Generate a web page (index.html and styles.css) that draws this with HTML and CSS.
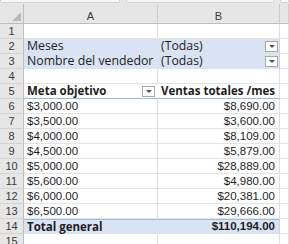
FILE: index.html
```html
<!DOCTYPE html>
<html>
<head>
<meta charset="utf-8">
<link rel="stylesheet" href="styles.css">
</head>
<body>
<div class="sheet">
  <div class="topbar">
    <div class="tb-box tb-left"></div>
    <div class="tb-box tb-mid"></div>
    <div class="tb-box tb-right"></div>
  </div>
  <div class="row head">
    <div class="rh corner"><span class="tri"></span></div>
    <div class="ch">A</div>
    <div class="ch">B</div>
    <div class="ch"></div>
  </div>
  <div class="row"><div class="rh">1</div><div class="c"></div><div class="c"></div><div class="c"></div></div>
  <div class="row filt"><div class="rh">2</div><div class="c f">Meses</div><div class="c f split"><span>(Todas)</span><span class="dd"></span></div><div class="c"></div></div>
  <div class="row filt"><div class="rh">3</div><div class="c f">Nombre del vendedor</div><div class="c f split"><span>(Todas)</span><span class="dd"></span></div><div class="c"></div></div>
  <div class="row"><div class="rh">4</div><div class="c"></div><div class="c"></div><div class="c"></div></div>
  <div class="row hdr"><div class="rh">5</div><div class="c b hb split"><span>Meta objetivo</span><span class="dd"></span></div><div class="c b hb">Ventas totales /mes</div><div class="c"></div></div>
  <div class="row"><div class="rh">6</div><div class="c n">$3,000.00</div><div class="c n r">$8,690.00</div><div class="c"></div></div>
  <div class="row"><div class="rh">7</div><div class="c n">$3,500.00</div><div class="c n r">$3,600.00</div><div class="c"></div></div>
  <div class="row"><div class="rh">8</div><div class="c n">$4,000.00</div><div class="c n r">$8,109.00</div><div class="c"></div></div>
  <div class="row"><div class="rh">9</div><div class="c n">$4,500.00</div><div class="c n r">$5,879.00</div><div class="c"></div></div>
  <div class="row"><div class="rh">10</div><div class="c n">$5,000.00</div><div class="c n r">$28,889.00</div><div class="c"></div></div>
  <div class="row"><div class="rh">11</div><div class="c n">$5,600.00</div><div class="c n r">$4,980.00</div><div class="c"></div></div>
  <div class="row"><div class="rh">12</div><div class="c n">$6,000.00</div><div class="c n r">$20,381.00</div><div class="c"></div></div>
  <div class="row"><div class="rh">13</div><div class="c n">$6,500.00</div><div class="c n r">$29,666.00</div><div class="c"></div></div>
  <div class="row tot"><div class="rh">14</div><div class="c b t">Total general</div><div class="c b t n r">$110,194.00</div><div class="c"></div></div>
  <div class="row"><div class="rh">15</div><div class="c"></div><div class="c"></div><div class="c"></div></div>
</div>
</body>
</html>
```

FILE: styles.css
```css
* { box-sizing: border-box; }
html, body { margin: 0; padding: 0; background: #ffffff; }
body { width: 289px; height: 244px; overflow: hidden; font-family: "Open Sans", "Liberation Sans", sans-serif; font-size: 12.3px; color: #1e1e1e; }
.sheet { display: flex; flex-direction: column; }
.topbar { height: 4px; background: #e8e8e8; display: flex; gap: 6px; }
.tb-box { height: 3px; background: #f8f8f8; border: 1px solid #d2d2d2; border-top: none; border-radius: 0 0 2px 2px; }
.tb-left { width: 120px; }
.tb-mid { width: 148px; }
.tb-right { flex: 1; }
.row { display: grid; grid-template-columns: 24px 134px 122px 1fr; height: 15px; }
.row.head { height: 20px; }
.rh { background: #e6e6e6; border-right: 1px solid #bdbdbd; border-bottom: 1px solid #d4d4d4; color: #3a3a3a; font-family: "Liberation Sans", Arial, sans-serif; font-size: 11px; text-align: center; line-height: 14px; }
.corner { position: relative; border-bottom: 1px solid #bdbdbd; }
.tri { position: absolute; right: 2px; bottom: 2px; width: 0; height: 0; border-left: 9px solid transparent; border-bottom: 9px solid #b9b9b9; }
.ch { background: #e6e6e6; border-right: 1px solid #cdcdcd; border-bottom: 1px solid #bdbdbd; color: #3a3a3a; font-family: "Liberation Sans", Arial, sans-serif; font-size: 11px; text-align: center; padding-top: 5px; line-height: 14px; }
.c { border-right: 1px solid #dedede; border-bottom: 1px solid #e4e4e4; padding: 0 3px; line-height: 14px; white-space: nowrap; overflow: visible; }
.c.n { font-family: "Liberation Sans", Arial, sans-serif; font-size: 11.5px; }
.c.r { text-align: right; padding-right: 4px; }
.c.b { font-weight: 700; font-size: 11.5px; }
.c.f { background: #dae3f3; border-right-color: #dae3f3; border-bottom-color: #dae3f3; }
.row.filt .c.f:nth-child(3) { border-right-color: #c9d3e3; }
.split { display: flex; align-items: center; justify-content: space-between; padding-right: 1px; }
.dd { width: 13px; height: 11px; background: #ffffff; border: 1px solid #a8a8a8; position: relative; flex: none; }
.dd::after { content: ""; position: absolute; left: 3px; top: 3px; border-left: 3px solid transparent; border-right: 3px solid transparent; border-top: 3px solid #505050; }
.c.hb { border-bottom: 1px solid #9fb8de; border-right-color: transparent; }
.c.hb:nth-child(3) { border-right-color: #dedede; }
.c.t { background: #dae3f3; border-top: 1px solid #9fb8de; border-bottom: 1px solid #dae3f3; border-right-color: #dae3f3; line-height: 13px; }
.c.t.r { border-right-color: #c9d3e3; }
.row.hdr .c.hb .dd { margin-right: 1px; }
```
